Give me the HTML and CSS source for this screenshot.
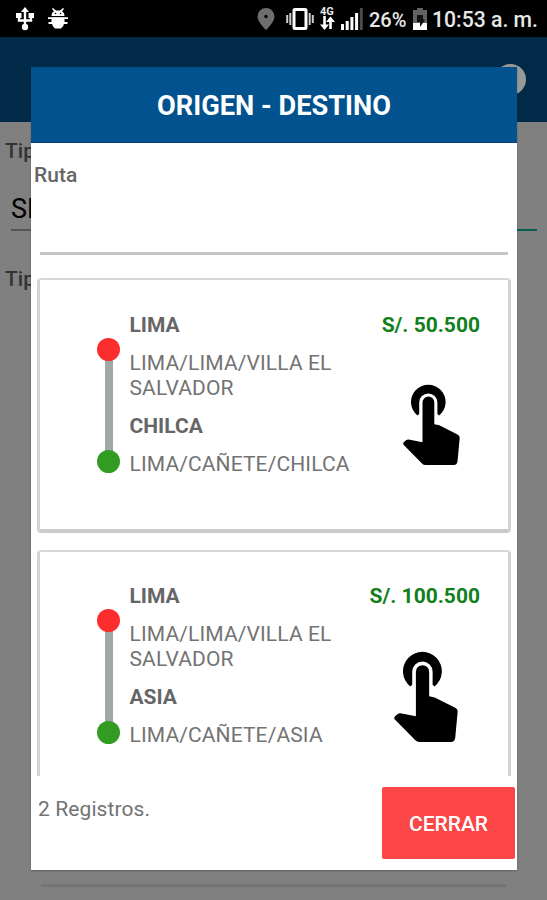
FILE: index.html
```
<!DOCTYPE html>
<html lang="es">

<head>
    <meta charset="utf-8">
    <meta name="viewport" content="width=device-width, initial-scale=1.0">
    <title>Origen - Destino</title>
    <link rel="stylesheet" href="styles.css">
</head>

<body>
    <svg width="0" height="0" class="defs">
        <symbol id="touch" viewBox="0 0 57 81">
            <path d="M14.500 31.500A17.300 17.300 0 1 1 36.100 31.500L34.400 30V18.500A9 9 0 0 0 16.200 18.500V30Z"/>
            <path d="M19.500 18.500a5.900 5.900 0 0 1 11.800 0V40.300l5 1L54.500 50.500Q57 52 56.700 54L54.500 77.500Q53.800 81 51 81H22.500Q20.500 81 19 79.500L.8 61Q-.5 59.500 1 58L3 56.300Q4.500 55.100 7 55.700L19.500 58.200Z"/>
        </symbol>
    </svg>

    <div class="status">
        <svg class="usb" width="18" height="24" viewBox="0 0 18 24">
            <path d="M9 3V21M3 8v5.500h12V8" fill="none" stroke="#fff" stroke-width="2.400"/>
            <path d="M9 0l4 5H5zM0 6h5.500v5H0zM12.500 6H18v5h-5.500z" fill="#fff"/>
            <circle cx="9" cy="20" r="3.200" fill="#fff"/>
        </svg>
        <svg class="bug" width="20" height="22" viewBox="0 0 20 22" fill="#fff">
            <path d="M3.500 8C3.500 5 5 4 6 3.500L4 .8 5 0l3 2.500h4L15 0l1 .8-2 2.700c1 .5 2.500 1.500 2.500 4.500zM3.500 9.500h13V14q-.5 4-3.500 6.500H7Q4 18 3.500 14z"/>
            <path d="M0 10.200h20M.5 15h19" stroke="#fff" stroke-width="1.800"/>
            <circle cx="7.500" cy="5.500" r=".8" fill="#000"/>
            <circle cx="12.500" cy="5.500" r=".8" fill="#000"/>
        </svg>
        <svg class="pin" width="18" height="22" viewBox="0 0 18 22">
            <path d="M9 0a8.500 8.500 0 0 0-8.500 8.500C.5 14 9 22 9 22s8.500-8 8.500-13.500A8.500 8.500 0 0 0 9 0z" fill="#6e6e6e"/>
            <circle cx="9" cy="8.500" r="1.700" fill="#000"/>
        </svg>
        <svg class="vibrate" width="28" height="22" viewBox="0 0 28 22">
            <rect x="8" y="1.500" width="12" height="19" rx="1" fill="none" stroke="#fff" stroke-width="3"/>
            <path d="M1.200 7v8M4.300 5v12M23.700 5v12M26.800 7v8" stroke="#ccc" stroke-width="2"/>
        </svg>
        <div class="net">
            <span>4G</span>
            <svg width="15" height="14" viewBox="0 0 15 14">
                <path d="M4.500 0v9M10.500 5v8" stroke="#fff" stroke-width="2.600"/>
                <path d="M0 8.500h9L4.500 14zM6 6h9l-4.500-5.500z" fill="#fff"/>
            </svg>
        </div>
        <svg class="signal" width="22" height="22" viewBox="0 0 22 22">
            <path d="M0 16h3v6H0zM4.700 13h3v9h-3zM9.400 9h3v13h-3zM14.100 5h3v17h-3z" fill="#fff"/>
            <path d="M18.800 0h3v22h-3z" fill="#4a4a4a"/>
        </svg>
        <span class="percent">26%</span>
        <svg class="battery" width="14" height="22" viewBox="0 0 14 22">
            <path d="M4 0h6v2h4v20H0V2h4z" fill="#626262"/>
            <path d="M0 15h14v7H0z" fill="#fff"/>
            <path d="M4 7h6v4l2 1-5 7v-5H4z" fill="#111"/>
        </svg>
        <span class="time">10:53 a. m.</span>
    </div>

    <div class="appbar"><i class="dot"></i></div>

    <div class="page">
        <p class="label">Tipo</p>
        <div class="select"><span>SE</span></div>
        <p class="label">Tipo</p>
        <div class="page-line"></div>
    </div>

    <div class="modal">
        <h1 class="modal-title">ORIGEN - DESTINO</h1>
        <label class="ruta" for="ruta">Ruta</label>
        <input id="ruta" class="ruta-input" type="text">

        <div class="list">
            <div class="card">
                <div class="track"><i class="from"></i><i class="to"></i></div>
                <div class="places">
                    <h2>LIMA</h2>
                    <p>LIMA/LIMA/VILLA EL<br>SALVADOR</p>
                    <h2>CHILCA</h2>
                    <p>LIMA/CAÑETE/CHILCA</p>
                </div>
                <div class="side">
                    <span class="price">S/. 50.500</span>
                    <svg class="hand"><use href="#touch"/></svg>
                </div>
            </div>
            <div class="card card-last">
                <div class="track"><i class="from"></i><i class="to"></i></div>
                <div class="places">
                    <h2>LIMA</h2>
                    <p>LIMA/LIMA/VILLA EL<br>SALVADOR</p>
                    <h2>ASIA</h2>
                    <p>LIMA/CAÑETE/ASIA</p>
                </div>
                <div class="side">
                    <span class="price">S/. 100.500</span>
                    <svg class="hand hand-big"><use href="#touch"/></svg>
                </div>
            </div>
        </div>

        <div class="footer">
            <span class="count">2 Registros.</span>
            <button class="close">CERRAR</button>
        </div>
    </div>
</body>

</html>
```
FILE: styles.css
```
* {
    box-sizing: border-box;
}

body {
    margin: 0;
    width: 547px;
    height: 900px;
    overflow: hidden;
    position: relative;
    background-color: #808080;
    font-family: Roboto, sans-serif;
    color: #666;
}

h1, h2, p {
    margin: 0;
}

.defs {
    position: absolute;
}

/* status bar */
.status {
    height: 37px;
    background-color: #000;
    color: #e8e8e8;
    display: flex;
    align-items: center;
    padding: 0 10px 0 16px;
    white-space: nowrap;
}

.status svg {
    flex: none;
}

.bug {
    margin-left: 14px;
}

.pin {
    margin-left: auto;
}

.vibrate {
    margin-left: 11px;
}

.net {
    width: 16px;
    margin-left: 6px;
    display: flex;
    flex-direction: column;
}

.net span {
    font-size: 11px;
    line-height: 9px;
    font-weight: bold;
}

.signal {
    margin-left: 5px;
}

.percent {
    font-size: 20px;
    font-weight: 500;
    line-height: 24px;
    padding-top: 2px;
    width: 38px;
    margin-left: 6px;
}

.battery {
    margin-left: 6px;
}

.time {
    font-size: 21.200px;
    font-weight: 500;
    line-height: 24px;
    padding-top: 2px;
    width: 105px;
    margin-left: 5px;
}

.appbar {
    height: 85px;
    background-color: #012a49;
    display: flex;
    justify-content: flex-end;
    padding: 27px 21px 0 0;
}

.dot {
    width: 31px;
    height: 31px;
    border-radius: 50%;
    background-color: #999;
}

/* dimmed screen behind the dialog */
.page {
    padding: 16px 10px 0 5px;
    color: #333;
}

.label {
    font-size: 21px;
    font-weight: 500;
    line-height: 26px;
}

.select {
    margin: 23px 0 35px 6px;
    height: 44px;
    border-bottom: 2px solid #075e50;
    color: #000;
    font-size: 27px;
    line-height: 44px;
}

.select span {
    display: block;
    width: 60px;
    height: 44px;
    border-bottom: 2px solid #555;
}

.page-line {
    height: 3px;
    margin: 592px 31px 0 36px;
    background-color: #747474;
}

/* dialog */
.modal {
    position: absolute;
    left: 31px;
    top: 67px;
    width: 486px;
    height: 803px;
    background-color: #fff;
    box-shadow: 0 1px 2px rgba(0, 0, 0, .25);
    display: flex;
    flex-direction: column;
}

.modal-title {
    height: 76px;
    background-color: #02528f;
    border-bottom: 1px solid #01407c;
    color: #fff;
    font-size: 27.200px;
    font-weight: 700;
    line-height: 79px;
    text-align: center;
}

.ruta {
    margin: 19px 0 0 3px;
    font-size: 21px;
    font-weight: 500;
    line-height: 26px;
}

.ruta-input {
    height: 67px;
    margin: 0 9px;
    padding: 0;
    border: 0;
    border-bottom: 3px solid #c6c6c6;
    background: none;
    outline: none;
}

.list {
    margin-top: 23px;
    height: 498px;
    padding: 0 6px;
    overflow: hidden;
}

.card {
    height: 255px;
    margin-bottom: 17px;
    border: 2px solid #d0d3d0;
    border-width: 2px 3px 4px;
    border-color: #d6d6d6 #d2d4d2 #c9cbc9;
    border-radius: 4px;
    display: flex;
    padding: 33px 28px 0 57px;
}

.card-last {
    padding-top: 32px;
}

.track {
    flex: none;
    width: 23px;
    height: 135px;
    margin-top: 25px;
    display: flex;
    flex-direction: column;
    justify-content: space-between;
    background: linear-gradient(#a1a6a9, #a1a6a9) center / 8px 112px no-repeat;
}

.track i {
    width: 23px;
    height: 23px;
    border-radius: 50%;
}

.from {
    background-color: #fc2d2d;
}

.to {
    background-color: #319b22;
}

.places {
    flex: none;
    width: 230px;
    margin-left: 9.500px;
    white-space: nowrap;
}

.places h2 {
    font-size: 21px;
    font-weight: 700;
    line-height: 25px;
}

.places p {
    margin: 13px 0;
    color: #737373;
    font-size: 21px;
    line-height: 25px;
    letter-spacing: .12px;
}

.side {
    flex: 1;
    display: flex;
    flex-direction: column;
    align-items: flex-end;
}

.price {
    color: #12801a;
    font-size: 21px;
    font-weight: 700;
    line-height: 25px;
    white-space: nowrap;
}

.hand {
    width: 57px;
    height: 81px;
    margin: 46px 20px 0 0;
}

.hand-big {
    width: 64px;
    height: 91px;
    margin: 42px 22px 0 0;
}

.footer {
    display: flex;
    justify-content: space-between;
    padding: 11px 2px 0 7px;
}

.count {
    margin-top: 10px;
    color: #737373;
    font-size: 21px;
    line-height: 25px;
    letter-spacing: .1px;
}

.close {
    width: 133px;
    height: 72px;
    padding: 2px 0 0;
    border: 0;
    border-radius: 2px;
    background-color: #fc4546;
    color: #fff;
    font-family: inherit;
    font-size: 21px;
    font-weight: 500;
}
```
